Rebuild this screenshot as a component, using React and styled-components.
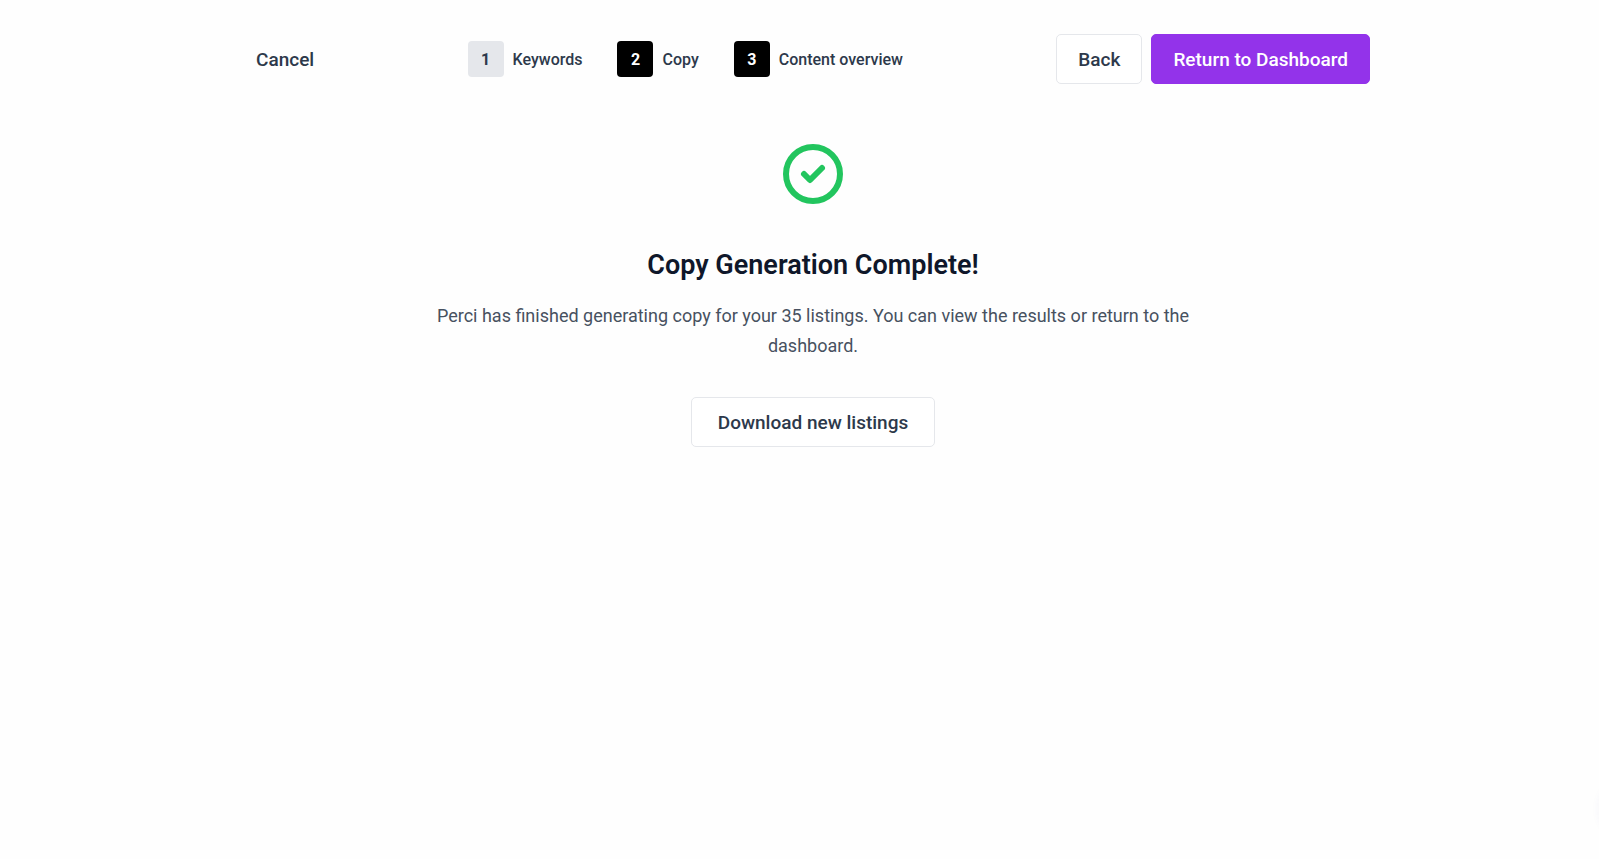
import React from 'react';
import styled, { createGlobalStyle } from 'styled-components';

const GlobalStyle = createGlobalStyle`
  *,
  *::before,
  *::after {
    box-sizing: border-box;
  }

  body {
    margin: 0;
    background: #fefefe;
    color: #2d394b;
    font-family: Roboto, 'Liberation Sans', sans-serif;
    font-size: 19px;
    overflow-x: hidden;
  }
`;

const Page = styled.div`
  padding: 34px 0 34px 27px;
`;

const Header = styled.header`
  display: flex;
  align-items: center;
  justify-content: space-between;
  max-width: 1114px;
  margin: 0 auto;
`;

const CancelLink = styled.a`
  color: inherit;
  font-weight: 500;
  text-decoration: none;
`;

const Steps = styled.ol`
  display: flex;
  gap: 35px;
  margin: 0;
  padding: 0;
  list-style: none;
`;

const Step = styled.li`
  display: flex;
  align-items: center;
  gap: 9px;
  font-size: 16px;
  font-weight: 500;
`;

const StepNumber = styled.span`
  display: flex;
  align-items: center;
  justify-content: center;
  width: 36px;
  height: 36px;
  border-radius: 4px;
  background: ${(props) => (props.$filled ? '#000000' : '#e5e7eb')};
  color: ${(props) => (props.$filled ? '#ffffff' : 'inherit')};
  font-weight: 700;
`;

const Actions = styled.div`
  display: flex;
  gap: 9px;
`;

const Button = styled.button`
  height: 50px;
  padding: 0 ${(props) => (props.$wide ? '26px' : '21px')};
  border: 1px solid ${(props) => (props.$primary ? '#9333ea' : '#e5e7eb')};
  border-radius: 5px;
  background: ${(props) => (props.$primary ? '#9333ea' : '#ffffff')};
  color: ${(props) => (props.$primary ? '#ffffff' : 'inherit')};
  font: inherit;
  font-weight: 500;
  cursor: pointer;
`;

const Result = styled.main`
  display: flex;
  flex-direction: column;
  align-items: center;
  max-width: 800px;
  margin: 60px auto 0;
  text-align: center;
`;

const CheckIcon = styled.svg`
  width: 60px;
  height: 60px;
`;

const Title = styled.h1`
  margin: 43px 0 0;
  color: #0f172a;
  font-size: 27px;
  font-weight: 600;
  line-height: 36px;
`;

const Message = styled.p`
  margin: 18px 0 36px;
  color: #475160;
  font-size: 18px;
  line-height: 30px;
`;

// chat launcher tucked behind the right edge
const Launcher = styled.div`
  position: fixed;
  right: -60px;
  bottom: 20px;
  width: 60px;
  height: 60px;
  border-radius: 50%;
  box-shadow: 0 0 10px rgba(60, 60, 160, 0.05);
`;

const steps = [
  { label: 'Keywords', filled: false },
  { label: 'Copy', filled: true },
  { label: 'Content overview', filled: true },
];

function App() {
  return (
    <>
      <GlobalStyle />
      <Page>
        <Header>
          <CancelLink href='#'>Cancel</CancelLink>
          <Steps>
            {steps.map((step, index) => (
              <Step key={step.label}>
                <StepNumber $filled={step.filled}>{index + 1}</StepNumber>
                {step.label}
              </Step>
            ))}
          </Steps>
          <Actions>
            <Button type='button'>Back</Button>
            <Button
              type='button'
              $primary>
              Return to Dashboard
            </Button>
          </Actions>
        </Header>
        <Result>
          <CheckIcon
            viewBox='0 0 60 60'
            fill='none'
            stroke='#22c55e'
            strokeWidth='6'
            strokeLinecap='round'
            strokeLinejoin='round'
            aria-hidden='true'>
            <circle cx='30' cy='30' r='27' />
            <path d='M21 30l6 6 12-12' />
          </CheckIcon>
          <Title>Copy Generation Complete!</Title>
          <Message>
            Perci has finished generating copy for your 35 listings. You can
            view the results or return to the dashboard.
          </Message>
          <Button
            type='button'
            $wide>
            Download new listings
          </Button>
        </Result>
      </Page>
      <Launcher />
    </>
  );
}

export default App;
